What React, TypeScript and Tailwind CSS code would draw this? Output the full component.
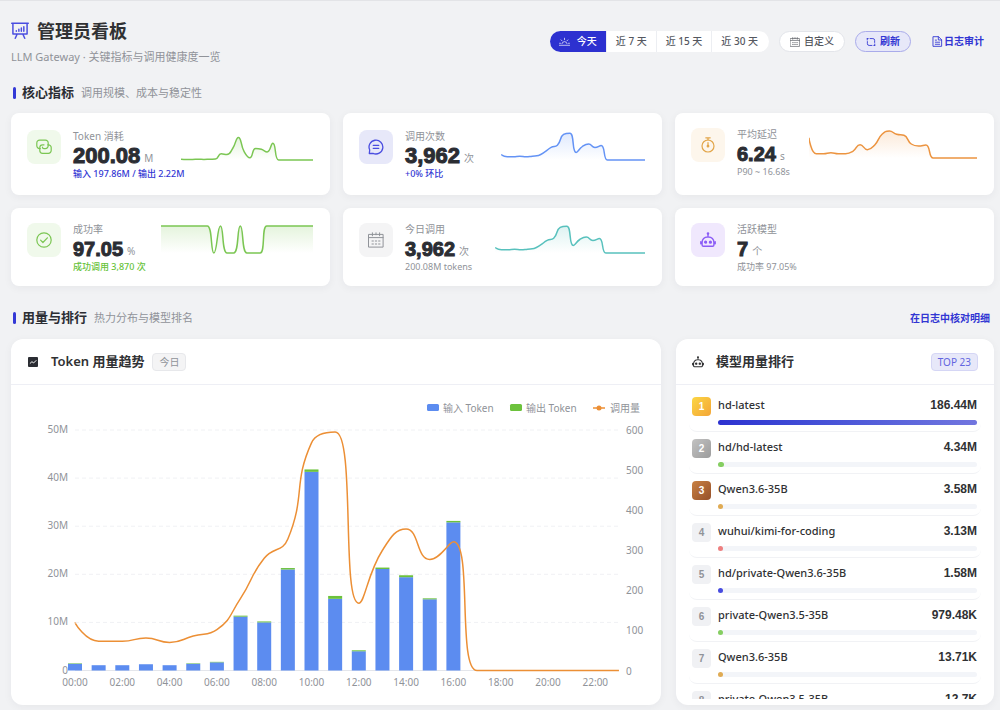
import React, { useState } from 'react';

type Point = [number, number];

interface Metric {
  label: string;
  value: string;
  unit: string;
  note: string;
  noteClass: string;
  iconClass: string;
  icon: React.ReactNode;
  cardClass: string;
  valueClass: string;
  chart?: {
    id: string;
    data: number[];
    max: number;
    color: string;
    width: number;
    sizeClass: string;
  };
}

interface ModelUsage {
  name: string;
  total: string;
  percent: number;
  badgeClass: string;
  barClass: string;
}

const INPUT_TOKENS = [1.4, 1.1, 1.1, 1.3, 1.1, 1.4, 1.7, 11.2, 10, 21, 41.3, 14.9, 4, 21.1, 19.4, 14.8, 30.8, 0, 0, 0, 0, 0, 0, 0];
const OUTPUT_TOKENS = [0.1, 0, 0, 0, 0, 0.1, 0.1, 0.2, 0.2, 0.3, 0.5, 0.6, 0.2, 0.3, 0.4, 0.2, 0.3, 0, 0, 0, 0, 0, 0, 0];
const CALLS = [119, 73, 73, 81, 70, 86, 102, 180, 280, 328, 568, 595, 168, 300, 353, 277, 321, 0, 0, 0, 0, 0, 0, 0];
const LATENCY = [61, 13, 13, 16, 13, 13, 20, 40, 25, 39, 71, 81, 71, 68, 42, 36, 39, 0, 0, 0, 0, 0, 0, 0];
const SUCCESS = [1, 1, 1, 1, 1, 1, 1, 1, 0, 1, 0, 0, 1, 0, 0, 0, 1, 1, 1, 1, 1, 1, 1, 1];
const TOTAL_TOKENS = INPUT_TOKENS.map((v, i) => v + OUTPUT_TOKENS[i]);

const clamp = (v: number, a: number, b: number) =>
  Math.max(Math.min(a, b), Math.min(Math.max(a, b), v));

// Bezier smoothing whose control points never leave the box of their segment
const smoothPath = (pts: Point[], smooth = 0.5) => {
  let d = `M${pts[0][0]} ${pts[0][1]}`;
  let out: Point = pts[0];
  for (let i = 1; i < pts.length; i++) {
    const prev = pts[i - 1];
    const cur = pts[i];
    const next = pts[i + 1];
    let into: Point = cur;
    let nextOut: Point = cur;
    if (next) {
      const lenPrev = Math.hypot(cur[0] - prev[0], cur[1] - prev[1]);
      const lenNext = Math.hypot(next[0] - cur[0], next[1] - cur[1]);
      const ratio = lenNext / (lenNext + lenPrev);
      const v = [next[0] - prev[0], next[1] - prev[1]];
      const axis = (k: 0 | 1) => {
        const first = clamp(cur[k] + v[k] * smooth * ratio, next[k], cur[k]);
        const before = clamp(cur[k] - ((first - cur[k]) * lenPrev) / lenNext, prev[k], cur[k]);
        return [before, cur[k] + ((cur[k] - before) * lenNext) / lenPrev];
      };
      const ax = axis(0);
      const ay = axis(1);
      into = [ax[0], ay[0]];
      nextOut = [ax[1], ay[1]];
    }
    d += `C${out[0].toFixed(2)} ${out[1].toFixed(2)} ${into[0].toFixed(2)} ${into[1].toFixed(2)} ${cur[0].toFixed(2)} ${cur[1].toFixed(2)}`;
    out = nextOut;
  }
  return d;
};

const Svg = ({ className = 'size-4', width = 1.2, children }: { className?: string; width?: number; children: React.ReactNode }) => (
  <svg
    viewBox="0 0 16 16"
    className={`shrink-0 ${className}`}
    fill="none"
    stroke="currentColor"
    strokeWidth={width}
    strokeLinecap="round"
    strokeLinejoin="round"
    aria-hidden="true"
  >
    {children}
  </svg>
);

const BoardIcon = () => (
  <Svg className="size-[18px]" width={1.3}>
    <path d="M.6 1.1h14.8M1.7 1.1v9.6h12.6V1.1M5.4 10.9l-1.6 3.6M10.6 10.9l1.6 3.6" />
    <path d="M4.7 7.7v.6M7 6.4v1.9M9.2 5.4v2.9M11.4 4.2v4.1" />
  </Svg>
);

const SunriseIcon = () => (
  <Svg className="size-[11px]" width={1}>
    <path d="M.5 13.5h15M4.2 11.2a3.9 3.9 0 0 1 7.6 0M8 3.2v2.2M3 5.6l1.5 1.5M13 5.6l-1.5 1.5M.8 10.6h1.4M13.8 10.6h1.4" />
  </Svg>
);

const CalendarIcon = ({ className }: { className?: string }) => (
  <Svg className={className} width={1}>
    <path d="M.9 2.4h14.2v12.7H.9zM.9 5.6h14.2M4.4.8v3M11.6.8v3M8 .8v2" />
    <path d="M4 9h1.4M7.3 9h1.4M10.6 9H12M4 12h1.4M7.3 12h1.4M10.6 12H12" />
  </Svg>
);

const RefreshIcon = () => (
  <Svg className="size-[10px]" width={1.4}>
    <path d="M6.5 2.5H11a2.8 2.8 0 0 1 2.8 2.8v3.4M9.500 13.500H5a2.800 2.800 0 0 1-2.800-2.800V7.300M2 2.500v2.300M14 13.500v-2.300M2 2.500h1.500M14 13.500h-1.500" />
  </Svg>
);

const DocIcon = () => (
  <Svg className="size-[11px]" width={1.3}>
    <path d="M2 1h7.5L14 5.5V15H2zM9.2 1v4.8H14M4.8 6h1.8M4.8 9h6.4M4.8 12h6.4" />
  </Svg>
);

const LinkIcon = () => (
  <Svg>
    <path d="M4.3 9.6h-.7A2.8 2.8 0 0 1 .8 6.800V3.900a2.800 2.800 0 0 1 2.800-2.800h5.800a2.800 2.800 0 0 1 2.800 2.800v2.900a2.800 2.800 0 0 1-2.800 2.800H8a1.600 1.600 0 0 1-1.600-1.600" />
    <path d="M11.7 5.8h.7a2.8 2.8 0 0 1 2.8 2.8v2.9a2.800 2.800 0 0 1-2.800 2.800H6.600a2.800 2.800 0 0 1-2.800-2.800V8.600a2.800 2.800 0 0 1 2.800-2.800H8" />
  </Svg>
);

const ChatIcon = () => (
  <Svg width={1.3}>
    <path d="M1.3 14.5 1.7 11A6.9 6.9 0 1 1 5 14.3zM5.3 6.4h5.4M5.3 9.4h5.4" />
  </Svg>
);

const TimerIcon = () => (
  <Svg>
    <circle cx="8" cy="9" r="6" />
    <path d="M5.8.8h4.4M8 .8V3M8 5.5v3" />
    <circle cx="8" cy="9.2" r=".8" fill="currentColor" />
  </Svg>
);

const CheckIcon = () => (
  <Svg>
    <circle cx="8" cy="8" r="7.2" />
    <path d="m4.6 8.2 2.3 2.3 4.5-4.7" />
  </Svg>
);

const RobotIcon = ({ className }: { className?: string }) => (
  <Svg className={className} width={1.4}>
    <path d="M8 1.6v3.2M3.4 14.2h9.2c.9 0 1.3-.5 1.3-1.3v-2.5A5.3 5.3 0 0 0 8.6 5H7.4a5.3 5.3 0 0 0-5.3 5.4v2.5c0 .8.4 1.3 1.3 1.3zM.8 9.8v2M15.2 9.8v2" />
    <circle cx="8" cy="1.5" r=".6" fill="currentColor" />
    <circle cx="5.6" cy="10.2" r=".9" fill="currentColor" />
    <circle cx="10.4" cy="10.2" r=".9" fill="currentColor" />
  </Svg>
);

const TrendIcon = () => (
  <svg viewBox="0 0 16 16" className="size-[10px] shrink-0" aria-hidden="true">
    <rect width="16" height="16" rx="1.5" fill="#2b2d33" />
    <path d="m3 10.5 3.3-3 2.7 2 4.3-4.3" fill="none" stroke="#fff" strokeWidth="1.5" />
  </svg>
);

const METRICS: Metric[] = [
  {
    label: 'Token 消耗',
    value: '200.08',
    unit: 'M',
    note: '输入 197.86M / 输出 2.22M',
    noteClass: 'text-[#3236d3] font-medium',
    iconClass: 'bg-[#f0f9eb] text-[#7bc653]',
    icon: <LinkIcon />,
    cardClass: 'h-[82px] pt-[17px]',
    valueClass: 'text-[22px]',
    chart: { id: 'tokens', data: TOTAL_TOKENS, max: 50, color: '#7bc653', width: 132, sizeClass: 'w-[132px]' },
  },
  {
    label: '调用次数',
    value: '3,962',
    unit: '次',
    note: '+0% 环比',
    noteClass: 'text-[#3236d3] font-medium',
    iconClass: 'bg-[#e7e8f9] text-[#4a4de0]',
    icon: <ChatIcon />,
    cardClass: 'h-[82px] pt-[17px]',
    valueClass: 'text-[22px]',
    chart: { id: 'calls', data: CALLS, max: 600, color: '#6493f5', width: 144, sizeClass: 'w-36' },
  },
  {
    label: '平均延迟',
    value: '6.24',
    unit: 's',
    note: 'P90 ~ 16.68s',
    noteClass: 'text-[#909399]',
    iconClass: 'bg-[#fdf6ec] text-[#e2a549]',
    icon: <TimerIcon />,
    cardClass: 'h-[82px] pt-[15px]',
    valueClass: 'text-xl',
    chart: { id: 'latency', data: LATENCY, max: 81, color: '#ec9440', width: 168, sizeClass: 'w-[168px]' },
  },
  {
    label: '成功率',
    value: '97.05',
    unit: '%',
    note: '成功调用 3,870 次',
    noteClass: 'text-[#67c23a] font-medium',
    iconClass: 'bg-[#f0f9eb] text-[#7bc653]',
    icon: <CheckIcon />,
    cardClass: 'h-[78px] pt-[15px]',
    valueClass: 'text-xl',
    chart: { id: 'success', data: SUCCESS, max: 1, color: '#7bc653', width: 152, sizeClass: 'w-[152px]' },
  },
  {
    label: '今日调用',
    value: '3,962',
    unit: '次',
    note: '200.08M tokens',
    noteClass: 'text-[#909399]',
    iconClass: 'bg-[#f4f4f5] text-[#909399]',
    icon: <CalendarIcon />,
    cardClass: 'h-[78px] pt-[15px]',
    valueClass: 'text-xl',
    chart: { id: 'today', data: CALLS, max: 600, color: '#58c1bd', width: 150, sizeClass: 'w-[150px]' },
  },
  {
    label: '活跃模型',
    value: '7',
    unit: '个',
    note: '成功率 97.05%',
    noteClass: 'text-[#909399]',
    iconClass: 'bg-[#f0e8fd] text-[#8b5cf6]',
    icon: <RobotIcon />,
    cardClass: 'h-[78px] pt-[15px]',
    valueClass: 'text-xl',
  },
];

const PLAIN_BADGE = 'bg-[#f0f1f4] text-[#909399]';

const MODELS: ModelUsage[] = [
  { name: 'hd-latest', total: '186.44M', percent: 100, badgeClass: 'bg-linear-to-br from-[#fbd645] to-[#f3a536] text-white', barClass: 'bg-linear-to-r from-[#2d31d0] to-[#7276df]' },
  { name: 'hd/hd-latest', total: '4.34M', percent: 2.3, badgeClass: 'bg-linear-to-br from-[#c2c2c2] to-[#9c9c9c] text-white', barClass: 'bg-[#85ce61]' },
  { name: 'Qwen3.6-35B', total: '3.58M', percent: 2, badgeClass: 'bg-linear-to-br from-[#c98143] to-[#95502a] text-white', barClass: 'bg-[#e0ab53]' },
  { name: 'wuhui/kimi-for-coding', total: '3.13M', percent: 2, badgeClass: PLAIN_BADGE, barClass: 'bg-[#ee7f7f]' },
  { name: 'hd/private-Qwen3.6-35B', total: '1.58M', percent: 2, badgeClass: PLAIN_BADGE, barClass: 'bg-[#474be0]' },
  { name: 'private-Qwen3.5-35B', total: '979.48K', percent: 2, badgeClass: PLAIN_BADGE, barClass: 'bg-[#85ce61]' },
  { name: 'Qwen3.6-35B', total: '13.71K', percent: 2, badgeClass: PLAIN_BADGE, barClass: 'bg-[#e0ab53]' },
  { name: 'private-Qwen3.5-35B', total: '12.7K', percent: 2, badgeClass: PLAIN_BADGE, barClass: 'bg-[#ee7f7f]' },
];

const Sparkline = ({ chart }: { chart: NonNullable<Metric['chart']> }) => {
  const step = chart.width / (chart.data.length - 1);
  const line = smoothPath(chart.data.map((v, i) => [i * step, 29 - (v / chart.max) * 27]));
  return (
    <svg viewBox={`0 0 ${chart.width} 31`} className={`mt-px h-[31px] shrink-0 ${chart.sizeClass}`} aria-hidden="true">
      <defs>
        <linearGradient id={`fill-${chart.id}`} x1="0" y1="0" x2="0" y2="1">
          <stop offset="0" stopColor={chart.color} stopOpacity=".2" />
          <stop offset="1" stopColor={chart.color} stopOpacity="0" />
        </linearGradient>
      </defs>
      <path d={`${line}V29H0Z`} fill={`url(#fill-${chart.id})`} />
      <path d={line} fill="none" stroke={chart.color} strokeWidth="1.5" />
    </svg>
  );
};

const MetricCard = ({ metric }: { metric: Metric }) => (
  <article className={`flex items-start rounded-lg bg-white pr-[17px] pl-4 shadow-[0_2px_8px_rgba(30,35,60,0.05)] ${metric.cardClass}`}>
    <div className={`flex size-[34px] shrink-0 items-center justify-center rounded-lg ${metric.iconClass}`}>{metric.icon}</div>
    <div className="ml-3 w-0 grow whitespace-nowrap">
      <p className="text-[10px] leading-3 text-[#909399]">{metric.label}</p>
      <p className="flex h-[22px] items-center gap-1 pt-[6px]">
        <span className={`font-['Liberation_Sans'] leading-5 font-bold text-[#2b2d33] [-webkit-text-stroke:1px_#2b2d33] ${metric.valueClass}`}>{metric.value}</span>
        <span className="pt-1 text-[10px] leading-3 text-[#909399]">{metric.unit}</span>
      </p>
      <p className={`pt-1 text-[9px] leading-3 ${metric.noteClass}`}>{metric.note}</p>
    </div>
    {metric.chart && <Sparkline chart={metric.chart} />}
  </article>
);

const SectionTitle = ({ title, hint, children }: { title: string; hint: string; children?: React.ReactNode }) => (
  <div className="flex h-5 items-center pr-1 pl-[2px]">
    <span className="h-3 w-[3px] rounded-xs bg-[#3439d6]" />
    <h2 className="ml-[6px] text-[13px] font-bold text-[#2b2d33]">{title}</h2>
    <span className="ml-[7px] text-[11px] text-[#909399]">{hint}</span>
    {children}
  </div>
);

const X0 = 64;
const STEP = 23.65;
const BASE = 285.5;
const PLOT = 240.5;

const TrendChart = () => {
  const line = smoothPath(CALLS.map((v, i) => [X0 + i * STEP, BASE - (v / 600) * PLOT]));
  return (
    <svg viewBox="0 0 650 320" className="block w-full" role="img" aria-label="Token 用量趋势">
      <g fontSize="10" fill="#909399">
        <rect x="416" y="19" width="12" height="7" rx="1.5" fill="#5c8cf0" />
        <text x="432" y="27">输入 Token</text>
        <rect x="499" y="19" width="12" height="7" rx="1.5" fill="#6cc23c" />
        <text x="515" y="27">输出 Token</text>
        <path d="M582 23h12" stroke="#ec8f35" strokeWidth="1.5" />
        <circle cx="588" cy="23" r="2.5" fill="#ec8f35" />
        <text x="599" y="27">调用量</text>

        {[0, 10, 20, 30, 40, 50].map((v) => {
          const y = BASE - (v / 50) * PLOT;
          return (
            <g key={v}>
              <path d={`M${X0} ${y}H608`} stroke={v ? '#f0f1f4' : '#e4e6eb'} strokeDasharray={v ? '4 3' : undefined} />
              <text x="57" y={y + 3} textAnchor="end">{v ? `${v}M` : '0'}</text>
            </g>
          );
        })}
        {[0, 100, 200, 300, 400, 500, 600].map((v) => (
          <text key={v} x="615" y={BASE - (v / 600) * PLOT + 4}>{v}</text>
        ))}
        {Array.from({ length: 12 }, (_, i) => (
          <text key={i} x={X0 + i * 2 * STEP} y="301" textAnchor="middle">
            {`${String(i * 2).padStart(2, '0')}:00`}
          </text>
        ))}
      </g>
      {INPUT_TOKENS.map((v, i) => {
        const height = (v / 50) * PLOT;
        const extra = (OUTPUT_TOKENS[i] / 50) * PLOT;
        const x = X0 + i * STEP - 7;
        return (
          <g key={i}>
            <rect x={x} y={BASE - height} width="14" height={height} fill="#5c8cf0" />
            <rect x={x} y={BASE - height - extra} width="14" height={extra} fill="#6cc23c" />
          </g>
        );
      })}
      <path d={line} fill="none" stroke="#ec8f35" strokeWidth="1.5" />
    </svg>
  );
};

const RANGES = ['今天', '近 7 天', '近 15 天', '近 30 天'];

const App = () => {
  const [range, setRange] = useState('今天');

  return (
    <div className="min-h-screen border-t border-[#e3e4e7] bg-[#f1f2f4] pr-[6px] pb-[5px] pl-[11px] font-['Noto_Sans','Noto_Sans_CJK_SC',sans-serif] text-[#303133]">
      {/* Page header */}
      <header className="flex items-start justify-between pt-[18px] pr-[10px]">
        <div>
          <div className="flex h-6 items-center gap-2">
            <span className="text-[#4a4de0]"><BoardIcon /></span>
            <h1 className="text-lg leading-6 font-bold">管理员看板</h1>
          </div>
          <p className="mt-[6px] text-[11px] leading-4 text-[#909399]">LLM Gateway · 关键指标与调用健康度一览</p>
        </div>

        <div className="mt-3 flex h-[21px] items-stretch text-[10px] text-[#55585f]">
          <div className="flex overflow-hidden rounded-full bg-white">
            {RANGES.map((item) => (
              <button
                key={item}
                type="button"
                aria-pressed={range === item}
                onClick={() => setRange(item)}
                className={`flex items-center gap-[7px] border-r border-[#eceef2] px-[9px] font-medium last:border-r-0 last:pr-[11px] ${
                  range === item ? 'bg-[#2d31d0] font-bold text-white' : ''
                }`}
              >
                {item === '今天' && <SunriseIcon />}
                {item}
              </button>
            ))}
          </div>
          <button type="button" className="ml-[10px] flex items-center gap-1 rounded-full border border-[#e3e5ea] bg-white px-[10px] font-medium">
            <CalendarIcon className="size-[10px]" />
            自定义
          </button>
          <button type="button" className="ml-[10px] flex items-center gap-1 rounded-full border border-[#a9abea] bg-[#e7e8f9] px-[10px] font-bold text-[#3236d3]">
            <RefreshIcon />
            刷新
          </button>
          <a href="#logs" className="ml-[21px] flex items-center gap-px font-bold text-[#3236d3]">
            <DocIcon />
            日志审计
          </a>
        </div>
      </header>

      {/* Core metrics */}
      <section className="mt-[18px]">
        <SectionTitle title="核心指标" hint="调用规模、成本与稳定性" />
        <div className="mt-[10px] grid grid-cols-3 gap-x-[13px] gap-y-[13px]">
          {METRICS.map((metric) => (
            <MetricCard key={metric.label} metric={metric} />
          ))}
        </div>
      </section>

      {/* Usage and ranking */}
      <section className="mt-[22px]">
        <SectionTitle title="用量与排行" hint="热力分布与模型排名">
          <a href="#logs" className="ml-auto text-[10px] font-bold text-[#3236d3]">在日志中核对明细</a>
        </SectionTitle>
        <div className="mt-[11px] grid grid-cols-[650fr_318fr] gap-[15px]">
          <div className="overflow-hidden rounded-xl bg-white shadow-[0_2px_8px_rgba(30,35,60,0.05)]">
            <div className="flex h-[46px] items-center border-b border-[#eeeff5] px-[17px]">
              <TrendIcon />
              <h3 className="ml-[13px] text-[13px] font-semibold">Token 用量趋势</h3>
              <span className="ml-2 rounded-sm border border-[#e7e8eb] bg-[#f4f4f5] px-[6px] text-[10px] leading-4 text-[#909399]">今日</span>
            </div>
            <TrendChart />
          </div>

          <div className="relative overflow-hidden rounded-xl bg-white shadow-[0_2px_8px_rgba(30,35,60,0.05)]">
            <div className="flex h-[46px] items-center border-b border-[#eeeff5] px-4">
              <RobotIcon className="size-3" />
              <h3 className="ml-3 text-[13px] font-semibold">模型用量排行</h3>
              <span className="ml-auto rounded-sm border border-[#d5d6f5] bg-[#e7e8f9] px-[6px] text-[10px] leading-4 text-[#6265e0]">TOP 23</span>
            </div>
            <ol className="absolute inset-x-[13px] top-[51px] bottom-[6px] overflow-hidden">
              {MODELS.map((model, index) => (
                <li key={index} className="flex h-[42px] rounded-lg border-b border-[#f1f2f5] pt-[7px] pr-1 pl-[3px]">
                  <span className={`flex size-[19px] shrink-0 items-center justify-center rounded-sm font-['Liberation_Sans'] text-[10px] font-bold ${model.badgeClass}`}>
                    {index + 1}
                  </span>
                  <div className="ml-[7px] min-w-0 grow">
                    <div className="flex justify-between text-[11px] leading-4">
                      <span className="font-medium">{model.name}</span>
                      <span className="font-['Liberation_Sans'] text-xs leading-4 font-bold">{model.total}</span>
                    </div>
                    <div className="mt-[7px] h-[5px] rounded-full bg-[#f3f5f9]">
                      <div className={`h-full rounded-full ${model.barClass}`} style={{ width: `${model.percent}%` }} />
                    </div>
                  </div>
                </li>
              ))}
            </ol>
          </div>
        </div>
      </section>
    </div>
  );
};

export default App;
